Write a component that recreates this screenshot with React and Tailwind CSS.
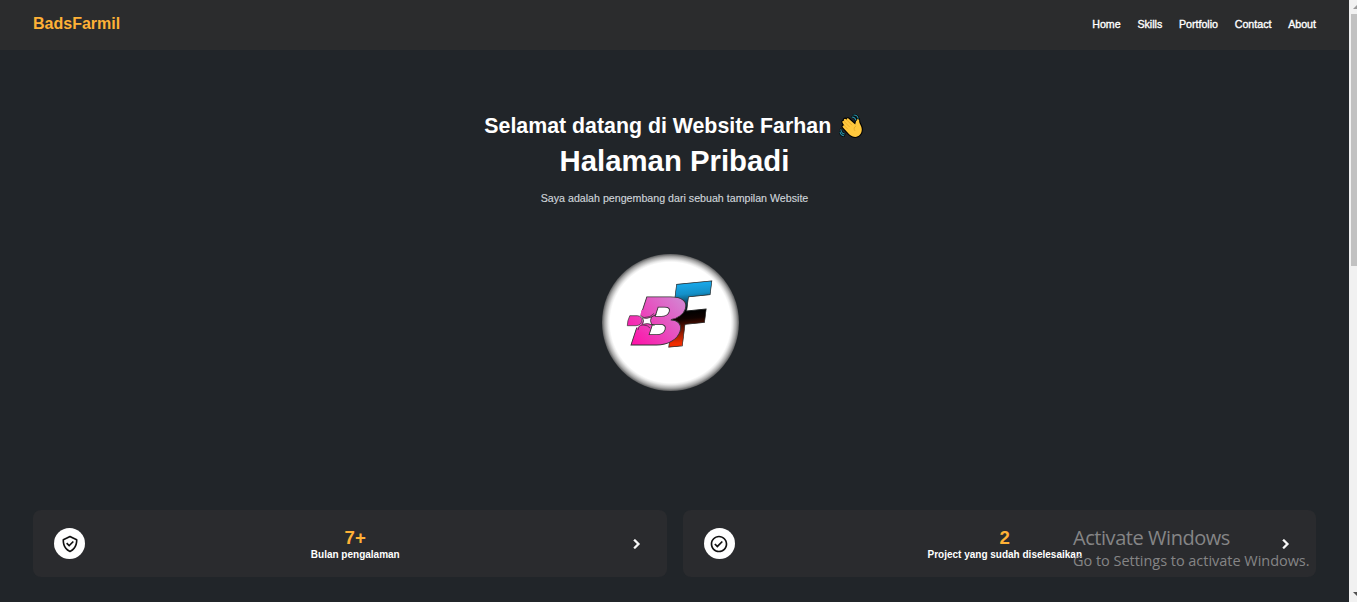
import { BiCheckShield, BiCheckCircle, BiChevronRight } from "react-icons/bi";

const links = ["Home", "Skills", "Portfolio", "Contact", "About"];

const stats = [
  { icon: BiCheckShield, value: "7+", label: "Bulan pengalaman" },
  { icon: BiCheckCircle, value: "2", label: "Project yang sudah diselesaikan" },
];

function WavingHand() {
  return (
    <svg viewBox="0 0 24 24" className="h-6 w-6 shrink-0" aria-hidden="true">
      <path
        d="M3.600 8.800C2.800 7.400 4.200 6.300 5.300 7.200L5 6.500c-.6-1.500 1-2.500 2-1.300l.8.800c-.5-1.500 1.200-2.300 2.200-1.100l6.200 5.700.8-3.400c.3-1.800 1-2.700 2.200-2.400 1.200.3 1 1.700 1 2.900.1 2 2.600 4 2.600 7.600 0 4.600-3 7.600-6.600 7.600-3.500 0-5.600-2.100-7.600-4.400L4 13.500c-1.200-1.400.2-2.700 1.400-1.800z"
        fill="#ffc83d" stroke="#000" strokeWidth="2.2" strokeLinejoin="round" paintOrder="stroke"
      />
      <path d="M5.200 7.500l5 5.100M7.800 6l5 5M5.200 11.500l3.400 3.500M16.800 12c-2 1.300-2.200 3-1 4.600" fill="none" stroke="#dfa024" strokeWidth=".7" strokeLinecap="round" />
      <g fill="none" strokeLinecap="round">
        <path d="M13 3c2 .1 3.400 1.200 3.700 2.900M14.800 1c2.300.2 4 1.500 4.300 3.300M1.900 15.500c.1 2.200 1.300 4 3.500 4.500M1 18c.3 2 1.600 3.300 3.700 3.800" stroke="#000" strokeWidth="2.200" />
        <path d="M13 3c2 .1 3.400 1.200 3.700 2.900M14.800 1c2.300.2 4 1.500 4.300 3.300M1.900 15.500c.1 2.200 1.300 4 3.500 4.500M1 18c.3 2 1.600 3.300 3.700 3.800" stroke="#2a93aa" strokeWidth="1.1" />
      </g>
    </svg>
  );
}

function Monogram() {
  return (
    <svg viewBox="0 0 138 138" className="h-[138px] w-[138px] shrink-0" aria-label="BF">
      <defs>
        <linearGradient id="fFill" x1="0" y1="0" x2="0" y2="1">
          <stop offset="0.2" stopColor="#18a8ea" />
          <stop offset="0.3" stopColor="#1490c8" />
          <stop offset="0.47" stopColor="#000" />
          <stop offset="0.54" stopColor="#100200" />
          <stop offset="0.77" stopColor="#f02d00" />
        </linearGradient>
        <linearGradient id="petalFill" gradientUnits="userSpaceOnUse" x1="28" y1="90" x2="82" y2="46">
          <stop offset="0" stopColor="#ff10a8" />
          <stop offset="1" stopColor="#cf8fd6" />
        </linearGradient>
        <linearGradient id="bFill" gradientUnits="userSpaceOnUse" x1="2" y1="-2" x2="42" y2="-46">
          <stop offset="0" stopColor="#ff10a8" />
          <stop offset="1" stopColor="#cf8fd6" />
        </linearGradient>
      </defs>
      <text transform="matrix(0.83 -0.08 -0.13 1.04 63.500 94.500)" fontFamily="Inter, sans-serif" fontWeight="900" fontSize="83" fill="url(#fFill)" stroke="#222" strokeWidth=".8">F</text>
      <text transform="matrix(1.13 0 -0.33 1 25.500 92)" fontFamily="Inter, sans-serif" fontWeight="900" fontSize="66" fill="url(#bFill)" stroke="#333" strokeWidth=".8">B</text>
      <path d="M35 61.500h5l2 4-3 5-2 4h-5z" fill="#fff" />
      <path d="M39.500 57l-1 5q1 2.500 4 2.500 6 0 9-3.500V57zM38 79l-2-1.500.5-4q1-1.500 4-1.500 5 0 7.500 3l-1 4z" fill="url(#petalFill)" />
      <path d="M38.500 62q1 2.500 4 2.500 6 0 9.500-4M36 77l1-3.500q1-1.500 4-1.500 5 0 7 3" fill="none" stroke="#333" strokeWidth=".7" />
      <path d="M27.800 62.700h7.700q4.700.8 4.700 4.300-1 5.500-6.200 5.700h-8.700q0-5 2.500-10z" fill="url(#petalFill)" stroke="#333" strokeWidth=".7" />
      <path d="M40.500 64.800q4 1.500 9-.8-2.200 3.500.3 7.700-4-2-9.300-.3 2-3.500 0-6.600z" fill="#fff" stroke="#333" strokeWidth=".8" />
      <path d="M49.300 64l5-2.500M49.500 71.500l3 .8" stroke="#333" strokeWidth="1" />
    </svg>
  );
}

export default function App() {
  return (
    <div className="flex h-[602px] w-[1357px] overflow-hidden bg-[#212529] font-['Liberation_Sans',Arial,sans-serif] text-white">
      <div className="relative flex w-[1349px] flex-col">
        <header className="flex h-[50px] items-center justify-between bg-[#2b2c2d] px-[33px] pb-[3px]">
          <div className="text-[16px] leading-5 font-bold text-[#ffb136]">BadsFarmil</div>
          <nav className="flex gap-[16.700px] pt-[1px] text-[10.670px] leading-4 [-webkit-text-stroke:0.35px_white]">
            {links.map((l) => <a key={l}>{l}</a>)}
          </nav>
        </header>

        <main className="flex flex-1 flex-col">
          <section className="flex h-[460px] flex-col items-center pt-[62px]">
            <h2 className="mr-[1.500px] flex items-center gap-2 text-[21.330px] leading-7 font-bold">
              Selamat datang di Website Farhan <WavingHand />
            </h2>
            <h1 className="mt-[3px] text-[29.330px] leading-9 font-bold">Halaman Pribadi</h1>
            <p className="mt-[11px] text-[10.670px] leading-4 text-[#ced4da] [-webkit-text-stroke:0.15px_#ced4da]">Saya adalah pengembang dari sebuah tampilan Website</p>
            <div className="mt-[48px] mr-[8px] h-[137px] w-[137px] overflow-hidden rounded-full bg-[radial-gradient(circle_closest-side,#fff_88%,#e8e8e8_91%,#a8a8a8_96%,#5c5d5e_100%)]">
              <div className="-mt-[1px]"><Monogram /></div>
            </div>
          </section>

          <section className="grid grid-cols-2 gap-4 px-[33px]">
            {stats.map(({ icon: Icon, value, label }) => (
              <article key={label} className="flex h-[67px] items-center justify-between rounded-[8px] bg-[#2a2b2e] pr-[21px] pl-[21px]">
                <div className="flex h-[31px] w-[31px] items-center justify-center rounded-full bg-white text-[#111]">
                  <Icon size={20} />
                </div>
                <div className="pt-[2px] text-center font-bold">
                  <div className="text-[18.670px] leading-5 text-[#ffb136]">{value}</div>
                  <div className="text-[10px] leading-[14px]">{label}</div>
                </div>
                <BiChevronRight size={20} className="stroke-[0.8] stroke-white" />
              </article>
            ))}
          </section>
        </main>

        <div className="pointer-events-none absolute top-[526px] left-[1073px] font-['Open_Sans','Noto_Sans',sans-serif] whitespace-nowrap text-[#858586]">
          <div className="text-[20px] leading-6 tracking-[-0.450px]">Activate Windows</div>
          <div className="text-[14.500px] leading-[22px] tracking-[-0.030px]">Go to Settings to activate Windows.</div>
        </div>
      </div>

      <div className="flex w-2 flex-col bg-[#f1f1f1] pl-0.5">
        <div className="flex h-[14px] items-center justify-end overflow-hidden">
          <svg viewBox="0 0 4 4" className="h-1 w-1"><path d="M0 4L4 0v4z" fill="#999" /></svg>
        </div>
        <div className="h-[252px] bg-[#c1c1c1]" />
        <div className="mt-auto flex h-[10px] justify-end overflow-hidden">
          <svg viewBox="0 0 4 4" className="h-1 w-1"><path d="M0 0h4v4z" fill="#505050" /></svg>
        </div>
      </div>
    </div>
  );
}
